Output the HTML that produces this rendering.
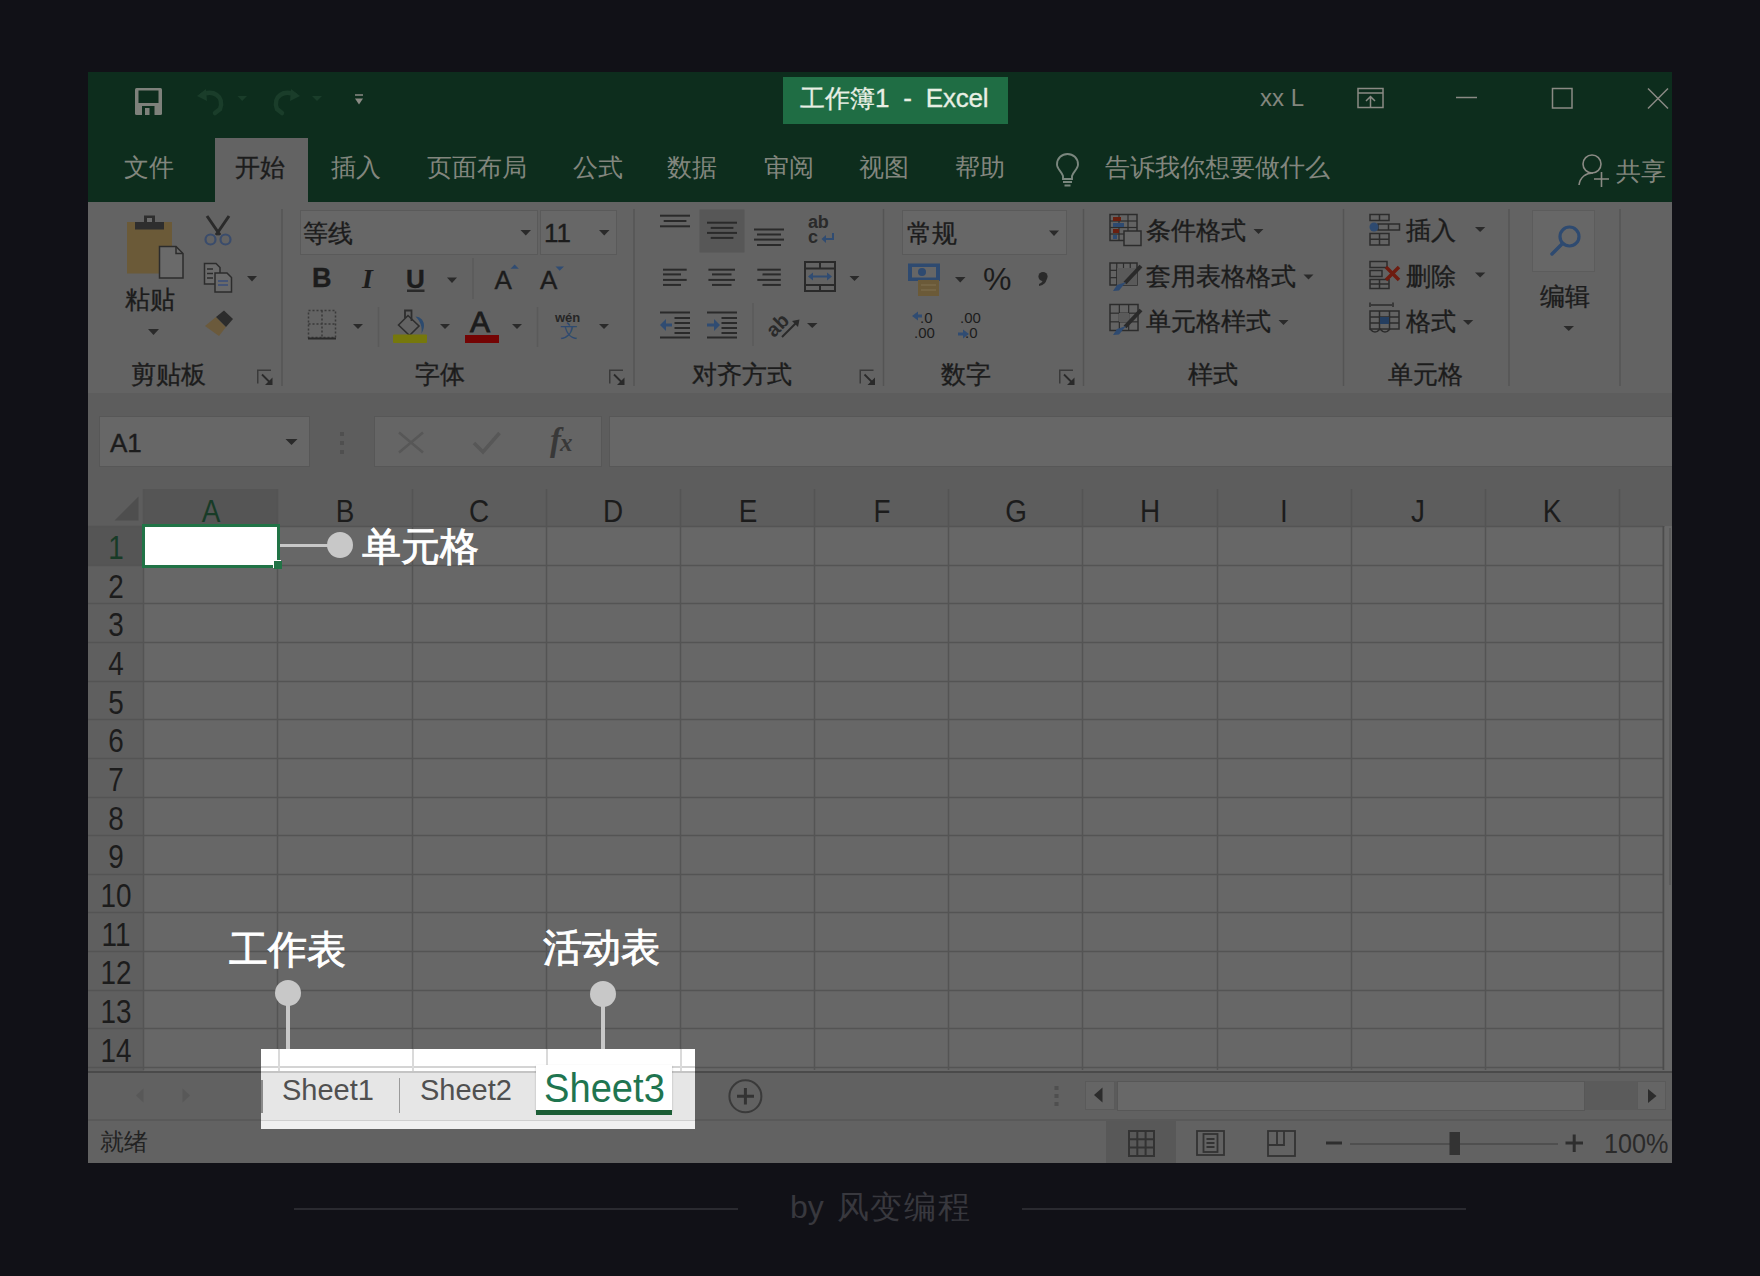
<!DOCTYPE html><html><head><meta charset="utf-8"><title>Excel</title><style>

html,body{margin:0;padding:0}
body{width:1760px;height:1276px;background:#111117;position:relative;overflow:hidden;font-family:"Liberation Sans",sans-serif}
.t{position:absolute;white-space:nowrap;line-height:1}
.c{text-align:center}
.lab{font-size:39px;color:#fff;-webkit-text-stroke:0.9px #fff}

</style></head><body>
<div style="position:absolute;left:88px;top:72px;width:1584px;height:130px;background:#0d2d1d;"></div>
<div style="position:absolute;left:88px;top:202px;width:1584px;height:191px;background:#636363;"></div>
<div style="position:absolute;left:88px;top:393px;width:1584px;height:23px;background:#5d5d5d;"></div>
<div style="position:absolute;left:88px;top:416px;width:1584px;height:51px;background:#5d5d5d;"></div>
<div style="position:absolute;left:88px;top:467px;width:1584px;height:22px;background:#5d5d5d;"></div>
<div style="position:absolute;left:88px;top:489px;width:1584px;height:582px;background:#676767;"></div>
<div style="position:absolute;left:88px;top:1071px;width:1584px;height:49px;background:#616161;"></div>
<div style="position:absolute;left:88px;top:1120px;width:1584px;height:43px;background:#626262;"></div>
<div style="position:absolute;left:783px;top:77px;width:225px;height:47px;background:#1f6d44;"></div>
<div class="t" style="left:800px;top:86px;font-size:25px;color:#e8efe4;line-height:25px;-webkit-text-stroke:0.3px #e8efe4">工作簿<span style="font-size:26px;letter-spacing:-0.2px">1&nbsp;&nbsp;-&nbsp; Excel</span></div>
<div class="t" style="left:1260px;top:85.5px;font-size:24px;color:#82867e;">xx L</div>
<div style="position:absolute;left:215px;top:138px;width:93px;height:64px;background:#636363;"></div>
<div class="t" style="left:124px;top:155px;font-size:25px;color:#82867e;">文件</div>
<div class="t" style="left:235px;top:155px;font-size:25px;color:#1c1c1c;-webkit-text-stroke:0.35px #1c1c1c;">开始</div>
<div class="t" style="left:331px;top:155px;font-size:25px;color:#82867e;">插入</div>
<div class="t" style="left:427px;top:155px;font-size:25px;color:#82867e;">页面布局</div>
<div class="t" style="left:573px;top:155px;font-size:25px;color:#82867e;">公式</div>
<div class="t" style="left:667px;top:155px;font-size:25px;color:#82867e;">数据</div>
<div class="t" style="left:764px;top:155px;font-size:25px;color:#82867e;">审阅</div>
<div class="t" style="left:859px;top:155px;font-size:25px;color:#82867e;">视图</div>
<div class="t" style="left:955px;top:155px;font-size:25px;color:#82867e;">帮助</div>
<div class="t" style="left:1105px;top:155px;font-size:25px;color:#82867e;">告诉我你想要做什么</div>
<div class="t" style="left:1616px;top:158.5px;font-size:25px;color:#82867e;">共享</div>
<div style="position:absolute;left:88px;top:489px;width:1584px;height:37px;background:#5d5d5d;"></div>
<div style="position:absolute;left:88px;top:526px;width:56px;height:545px;background:#5f5f5f;"></div>
<div style="position:absolute;left:144px;top:489px;width:134px;height:37px;background:#555555;"></div>
<div style="position:absolute;left:88px;top:526px;width:56px;height:39px;background:#555555;"></div>
<div class="t c" style="left:170.9px;top:496.5px;width:80px;font-size:30px;color:#183b27;transform:scale(0.93,1.05)">A</div>
<div class="t c" style="left:305.0px;top:496.5px;width:80px;font-size:30px;color:#1c1c1c;transform:scale(0.93,1.05)">B</div>
<div class="t c" style="left:439.2px;top:496.5px;width:80px;font-size:30px;color:#1c1c1c;transform:scale(0.93,1.05)">C</div>
<div class="t c" style="left:573.3px;top:496.5px;width:80px;font-size:30px;color:#1c1c1c;transform:scale(0.93,1.05)">D</div>
<div class="t c" style="left:707.5px;top:496.5px;width:80px;font-size:30px;color:#1c1c1c;transform:scale(0.93,1.05)">E</div>
<div class="t c" style="left:841.6px;top:496.5px;width:80px;font-size:30px;color:#1c1c1c;transform:scale(0.93,1.05)">F</div>
<div class="t c" style="left:975.8px;top:496.5px;width:80px;font-size:30px;color:#1c1c1c;transform:scale(0.93,1.05)">G</div>
<div class="t c" style="left:1109.9px;top:496.5px;width:80px;font-size:30px;color:#1c1c1c;transform:scale(0.93,1.05)">H</div>
<div class="t c" style="left:1244.1px;top:496.5px;width:80px;font-size:30px;color:#1c1c1c;transform:scale(0.93,1.05)">I</div>
<div class="t c" style="left:1378.2px;top:496.5px;width:80px;font-size:30px;color:#1c1c1c;transform:scale(0.93,1.05)">J</div>
<div class="t c" style="left:1512.4px;top:496.5px;width:80px;font-size:30px;color:#1c1c1c;transform:scale(0.93,1.05)">K</div>
<div class="t c" style="left:87.5px;top:533.0px;width:56px;font-size:30px;color:#183b27;transform:scale(0.93,1.08)">1</div>
<div class="t c" style="left:87.5px;top:571.6px;width:56px;font-size:30px;color:#1c1c1c;transform:scale(0.93,1.08)">2</div>
<div class="t c" style="left:87.5px;top:610.3px;width:56px;font-size:30px;color:#1c1c1c;transform:scale(0.93,1.08)">3</div>
<div class="t c" style="left:87.5px;top:649.0px;width:56px;font-size:30px;color:#1c1c1c;transform:scale(0.93,1.08)">4</div>
<div class="t c" style="left:87.5px;top:687.6px;width:56px;font-size:30px;color:#1c1c1c;transform:scale(0.93,1.08)">5</div>
<div class="t c" style="left:87.5px;top:726.2px;width:56px;font-size:30px;color:#1c1c1c;transform:scale(0.93,1.08)">6</div>
<div class="t c" style="left:87.5px;top:764.9px;width:56px;font-size:30px;color:#1c1c1c;transform:scale(0.93,1.08)">7</div>
<div class="t c" style="left:87.5px;top:803.5px;width:56px;font-size:30px;color:#1c1c1c;transform:scale(0.93,1.08)">8</div>
<div class="t c" style="left:87.5px;top:842.2px;width:56px;font-size:30px;color:#1c1c1c;transform:scale(0.93,1.08)">9</div>
<div class="t c" style="left:87.5px;top:880.8px;width:56px;font-size:30px;color:#1c1c1c;transform:scale(0.93,1.08)">10</div>
<div class="t c" style="left:87.5px;top:919.5px;width:56px;font-size:30px;color:#1c1c1c;transform:scale(0.93,1.08)">11</div>
<div class="t c" style="left:87.5px;top:958.1px;width:56px;font-size:30px;color:#1c1c1c;transform:scale(0.93,1.08)">12</div>
<div class="t c" style="left:87.5px;top:996.8px;width:56px;font-size:30px;color:#1c1c1c;transform:scale(0.93,1.08)">13</div>
<div class="t c" style="left:87.5px;top:1035.5px;width:56px;font-size:30px;color:#1c1c1c;transform:scale(0.93,1.08)">14</div>
<div style="position:absolute;left:99px;top:416px;width:211px;height:51px;background:#676767;box-sizing:border-box;border:1.5px solid #575757"></div>
<div class="t" style="left:110px;top:429.5px;font-size:26px;color:#1c1c1c;-webkit-text-stroke:0.35px #1c1c1c;">A1</div>
<div style="position:absolute;left:374px;top:416px;width:228px;height:51px;background:#656565;box-sizing:border-box;border:1.5px solid #575757"></div>
<div style="position:absolute;left:609px;top:416px;width:1063px;height:51px;background:#676767;box-sizing:border-box;border:1.5px solid #575757;border-right:none"></div>
<div class="t" style="left:550px;top:424px;font-size:33px;font-family:'Liberation Serif',serif;font-style:italic;font-weight:bold;color:#383838;letter-spacing:-1px">f<span style="font-size:25px;font-weight:bold">x</span></div>
<div style="position:absolute;left:1085px;top:1081px;width:30px;height:29px;background:#656565;box-sizing:border-box;border:1.5px solid #5a5a5a"></div>
<div style="position:absolute;left:1115px;top:1081px;width:522px;height:29px;background:#5b5b5b;"></div>
<div style="position:absolute;left:1117px;top:1080.5px;width:468px;height:30px;background:#686868;box-sizing:border-box;border:1.5px solid #575757"></div>
<div style="position:absolute;left:1637px;top:1081px;width:29px;height:29px;background:#656565;box-sizing:border-box;border:1.5px solid #5a5a5a"></div>
<div class="t" style="left:100px;top:1130px;font-size:24px;color:#222;">就绪</div>
<div style="position:absolute;left:1106px;top:1121px;width:70px;height:42px;background:#585858;"></div>
<div class="t" style="left:1604px;top:1130px;font-size:28px;color:#2a2a2a;transform:scaleX(0.9);transform-origin:0 0">100%</div>
<div class="t" style="left:131px;top:361.5px;font-size:25px;color:#1c1c1c;-webkit-text-stroke:0.35px #1c1c1c;">剪贴板</div>
<div class="t" style="left:415px;top:361.5px;font-size:25px;color:#1c1c1c;-webkit-text-stroke:0.35px #1c1c1c;">字体</div>
<div class="t" style="left:692px;top:361.5px;font-size:25px;color:#1c1c1c;-webkit-text-stroke:0.35px #1c1c1c;">对齐方式</div>
<div class="t" style="left:941px;top:361.5px;font-size:25px;color:#1c1c1c;-webkit-text-stroke:0.35px #1c1c1c;">数字</div>
<div class="t" style="left:1188px;top:361.5px;font-size:25px;color:#1c1c1c;-webkit-text-stroke:0.35px #1c1c1c;">样式</div>
<div class="t" style="left:1388px;top:361.5px;font-size:25px;color:#1c1c1c;-webkit-text-stroke:0.35px #1c1c1c;">单元格</div>
<div class="t" style="left:125px;top:287px;font-size:25px;color:#1c1c1c;-webkit-text-stroke:0.35px #1c1c1c;">粘贴</div>
<div style="position:absolute;left:300px;top:209.5px;width:238px;height:45px;background:#676767;box-sizing:border-box;border:1.5px solid #5a5a5a"></div>
<div style="position:absolute;left:540px;top:209.5px;width:77px;height:45px;background:#676767;box-sizing:border-box;border:1.5px solid #5a5a5a"></div>
<div class="t" style="left:303px;top:221px;font-size:25px;color:#1c1c1c;-webkit-text-stroke:0.35px #1c1c1c;">等线</div>
<div class="t" style="left:544px;top:220px;font-size:26px;color:#1c1c1c;-webkit-text-stroke:0.35px #1c1c1c;">11</div>
<div class="t" style="left:312px;top:265px;font-size:27px;color:#1c1c1c;-webkit-text-stroke:0.35px #1c1c1c;font-weight:bold">B</div>
<div class="t" style="left:362px;top:265px;font-size:28px;color:#1c1c1c;font-family:'Liberation Serif',serif;font-style:italic;font-weight:bold">I</div>
<div class="t" style="left:406px;top:266px;font-size:26px;color:#1c1c1c;-webkit-text-stroke:0.35px #1c1c1c;font-weight:bold">U</div>
<div class="t" style="left:494.5px;top:267px;font-size:26px;color:#1c1c1c;-webkit-text-stroke:0.35px #1c1c1c;">A</div>
<div class="t" style="left:540px;top:267px;font-size:26px;color:#1c1c1c;-webkit-text-stroke:0.35px #1c1c1c;">A</div>
<div class="t" style="left:470px;top:306.5px;font-size:30px;color:#1c1c1c;-webkit-text-stroke:0.35px #1c1c1c;-webkit-text-stroke:0.9px #1c1c1c">A</div>
<div class="t" style="left:555px;top:311px;font-size:13px;color:#262626;font-weight:bold">wén</div>
<div class="t" style="left:560px;top:322px;font-size:18px;color:#2e4a70;">文</div>
<div class="t" style="left:808px;top:213px;font-size:18px;color:#2a2a2a;font-weight:bold;letter-spacing:-0.3px">ab</div>
<div class="t" style="left:808px;top:227.5px;font-size:18px;color:#2a2a2a;font-weight:bold">c</div>
<div class="t" style="left:766px;top:312px;font-size:20px;color:#2a2a2a;font-weight:bold;transform:rotate(-45deg);transform-origin:15px 12px">ab</div>
<div style="position:absolute;left:901.5px;top:209.5px;width:165px;height:45px;background:#676767;box-sizing:border-box;border:1.5px solid #5a5a5a"></div>
<div class="t" style="left:907px;top:221px;font-size:25px;color:#1c1c1c;-webkit-text-stroke:0.35px #1c1c1c;">常规</div>
<div class="t" style="left:983px;top:263px;font-size:32px;color:#1c1c1c;-webkit-text-stroke:0.35px #1c1c1c;-webkit-text-stroke:0;">%</div>
<div class="t" style="left:920px;top:310px;font-size:15px;color:#1c1c1c;">.0</div>
<div class="t" style="left:914px;top:325px;font-size:15px;color:#1c1c1c;">.00</div>
<div class="t" style="left:960px;top:310px;font-size:15px;color:#1c1c1c;">.00</div>
<div class="t" style="left:965px;top:325px;font-size:15px;color:#1c1c1c;">.0</div>
<div class="t" style="left:1128px;top:230px;font-size:12px;color:#1c1c1c;">≠</div>
<div class="t" style="left:1146px;top:218px;font-size:25px;color:#1c1c1c;-webkit-text-stroke:0.35px #1c1c1c;">条件格式</div>
<div class="t" style="left:1146px;top:263.5px;font-size:25px;color:#1c1c1c;-webkit-text-stroke:0.35px #1c1c1c;">套用表格格式</div>
<div class="t" style="left:1146px;top:309px;font-size:25px;color:#1c1c1c;-webkit-text-stroke:0.35px #1c1c1c;">单元格样式</div>
<div class="t" style="left:1406px;top:218px;font-size:25px;color:#1c1c1c;-webkit-text-stroke:0.35px #1c1c1c;">插入</div>
<div class="t" style="left:1406px;top:264px;font-size:25px;color:#1c1c1c;-webkit-text-stroke:0.35px #1c1c1c;">删除</div>
<div class="t" style="left:1406px;top:309px;font-size:25px;color:#1c1c1c;-webkit-text-stroke:0.35px #1c1c1c;">格式</div>
<div style="position:absolute;left:1532px;top:209.5px;width:63px;height:62.5px;background:#676767;box-sizing:border-box;border:1.5px solid #5c5c5c"></div>
<div class="t" style="left:1540px;top:284px;font-size:25px;color:#1c1c1c;-webkit-text-stroke:0.35px #1c1c1c;">编辑</div>
<svg style="position:absolute;left:0;top:0" width="1760" height="1276" viewBox="0 0 1760 1276"><line x1="143.5" y1="489" x2="143.5" y2="1070" stroke="#545454" stroke-width="1.5"/><line x1="277.5" y1="489" x2="277.5" y2="1070" stroke="#545454" stroke-width="1.5"/><line x1="412.5" y1="489" x2="412.5" y2="1070" stroke="#545454" stroke-width="1.5"/><line x1="546.5" y1="489" x2="546.5" y2="1070" stroke="#545454" stroke-width="1.5"/><line x1="680.5" y1="489" x2="680.5" y2="1070" stroke="#545454" stroke-width="1.5"/><line x1="814.5" y1="489" x2="814.5" y2="1070" stroke="#545454" stroke-width="1.5"/><line x1="948.5" y1="489" x2="948.5" y2="1070" stroke="#545454" stroke-width="1.5"/><line x1="1082.5" y1="489" x2="1082.5" y2="1070" stroke="#545454" stroke-width="1.5"/><line x1="1217.5" y1="489" x2="1217.5" y2="1070" stroke="#545454" stroke-width="1.5"/><line x1="1351.5" y1="489" x2="1351.5" y2="1070" stroke="#545454" stroke-width="1.5"/><line x1="1485.5" y1="489" x2="1485.5" y2="1070" stroke="#545454" stroke-width="1.5"/><line x1="1619.5" y1="489" x2="1619.5" y2="1070" stroke="#545454" stroke-width="1.5"/><line x1="88" y1="526.5" x2="1663" y2="526.5" stroke="#545454" stroke-width="1.5"/><line x1="88" y1="565.5" x2="1663" y2="565.5" stroke="#545454" stroke-width="1.5"/><line x1="88" y1="603.5" x2="1663" y2="603.5" stroke="#545454" stroke-width="1.5"/><line x1="88" y1="642.5" x2="1663" y2="642.5" stroke="#545454" stroke-width="1.5"/><line x1="88" y1="681.5" x2="1663" y2="681.5" stroke="#545454" stroke-width="1.5"/><line x1="88" y1="719.5" x2="1663" y2="719.5" stroke="#545454" stroke-width="1.5"/><line x1="88" y1="758.5" x2="1663" y2="758.5" stroke="#545454" stroke-width="1.5"/><line x1="88" y1="797.5" x2="1663" y2="797.5" stroke="#545454" stroke-width="1.5"/><line x1="88" y1="835.5" x2="1663" y2="835.5" stroke="#545454" stroke-width="1.5"/><line x1="88" y1="874.5" x2="1663" y2="874.5" stroke="#545454" stroke-width="1.5"/><line x1="88" y1="912.5" x2="1663" y2="912.5" stroke="#545454" stroke-width="1.5"/><line x1="88" y1="951.5" x2="1663" y2="951.5" stroke="#545454" stroke-width="1.5"/><line x1="88" y1="990.5" x2="1663" y2="990.5" stroke="#545454" stroke-width="1.5"/><line x1="88" y1="1028.5" x2="1663" y2="1028.5" stroke="#545454" stroke-width="1.5"/><line x1="88" y1="1067.5" x2="1663" y2="1067.5" stroke="#545454" stroke-width="1.5"/><line x1="1663.5" y1="526" x2="1663.5" y2="1070" stroke="#4c4c4c" stroke-width="2"/><rect x="1664.5" y="527" width="7.5" height="544" fill="#686868"/><line x1="1670" y1="528" x2="1670" y2="885" stroke="#595959" stroke-width="1.5"/><line x1="88" y1="1072" x2="1672" y2="1072" stroke="#4a4a4a" stroke-width="2"/><line x1="88" y1="1120" x2="1672" y2="1120" stroke="#575757" stroke-width="1.5"/><polygon points="138.5,496.5 138.5,520.5 114.5,520.5" fill="#4e4e4e"/><polygon points="285.5,439 297.5,439 291.5,445" fill="#2a2a2a"/><rect x="340" y="432" width="4" height="4" fill="#4f4f4f"/><rect x="340" y="441" width="4" height="4" fill="#4f4f4f"/><rect x="340" y="450" width="4" height="4" fill="#4f4f4f"/><path d="M399 432.5 L423 452.5 M423 432.5 L399 452.5" stroke="#575757" stroke-width="2.5"/><path d="M474 443 L483 452 L499.5 433" stroke="#575757" stroke-width="3.5" fill="none"/><path d="M143.5 1088.5 L136 1095.5 L143.5 1102.5 Z" fill="#585858"/><path d="M182.5 1088.5 L190 1095.5 L182.5 1102.5 Z" fill="#585858"/><circle cx="745.4" cy="1096.3" r="16" fill="none" stroke="#3a3a3a" stroke-width="2"/><path d="M737 1096.3 H754 M745.4 1088 V1104.5" stroke="#333" stroke-width="3"/><rect x="1054.5" y="1086" width="4" height="4" fill="#4f4f4f"/><rect x="1054.5" y="1094" width="4" height="4" fill="#4f4f4f"/><rect x="1054.5" y="1102" width="4" height="4" fill="#4f4f4f"/><path d="M1102.5 1087.5 L1094 1095 L1102.5 1102.5 Z" fill="#2c2c2c"/><path d="M1648 1089 L1656.5 1096 L1648 1103 Z" fill="#2c2c2c"/><g stroke="#333" stroke-width="2" fill="none"><rect x="1129" y="1131" width="25" height="25"/><path d="M1137.3 1131 V1156 M1145.6 1131 V1156 M1129 1139.3 H1154 M1129 1147.6 H1154"/></g><g stroke="#333" stroke-width="1.8" fill="none"><rect x="1197" y="1131" width="27" height="24"/><rect x="1203.5" y="1134" width="14" height="18"/><path d="M1206.5 1139 H1214.5 M1206.5 1143 H1214.5 M1206.5 1147 H1214.5"/></g><g stroke="#333" stroke-width="1.8" fill="none"><rect x="1268" y="1131" width="27" height="25"/><path d="M1268 1145 H1284 V1131 M1277 1131 V1145"/></g><path d="M1326 1143 H1342" stroke="#2e2e2e" stroke-width="3"/><path d="M1350 1144 H1558" stroke="#4a4a4a" stroke-width="1.5"/><rect x="1449.5" y="1132" width="10.5" height="23" fill="#333"/><path d="M1565.5 1143 H1583 M1574.2 1134.5 V1152" stroke="#2e2e2e" stroke-width="3"/><line x1="282" y1="209" x2="282" y2="386" stroke="#545454" stroke-width="1.5"/><line x1="634" y1="209" x2="634" y2="386" stroke="#545454" stroke-width="1.5"/><line x1="883.5" y1="209" x2="883.5" y2="386" stroke="#545454" stroke-width="1.5"/><line x1="1083.5" y1="209" x2="1083.5" y2="386" stroke="#545454" stroke-width="1.5"/><line x1="1343.5" y1="209" x2="1343.5" y2="386" stroke="#545454" stroke-width="1.5"/><line x1="1509" y1="209" x2="1509" y2="386" stroke="#545454" stroke-width="1.5"/><line x1="1620" y1="209" x2="1620" y2="386" stroke="#545454" stroke-width="1.5"/><line x1="473" y1="258" x2="473" y2="299" stroke="#5a5a5a" stroke-width="1.5"/><line x1="378.5" y1="307" x2="378.5" y2="347" stroke="#5a5a5a" stroke-width="1.5"/><line x1="537.5" y1="307" x2="537.5" y2="347" stroke="#5a5a5a" stroke-width="1.5"/><line x1="753" y1="303" x2="753" y2="346" stroke="#5a5a5a" stroke-width="1.5"/><path d="M257.75 383.5 V370.25 H271" stroke="#3a3a3a" stroke-width="1.5" fill="none"/><path d="M262 374.5 L270 382.5" stroke="#2a2a2a" stroke-width="1.8"/><polygon points="272.5,385.0 265,385.0 272.5,377.5" fill="#2a2a2a"/><path d="M609.75 383.5 V370.25 H623" stroke="#3a3a3a" stroke-width="1.5" fill="none"/><path d="M614 374.5 L622 382.5" stroke="#2a2a2a" stroke-width="1.8"/><polygon points="624.5,385.0 617,385.0 624.5,377.5" fill="#2a2a2a"/><path d="M860.25 383.5 V370.25 H873.5" stroke="#3a3a3a" stroke-width="1.5" fill="none"/><path d="M864.5 374.5 L872.5 382.5" stroke="#2a2a2a" stroke-width="1.8"/><polygon points="875.0,385.0 867.5,385.0 875.0,377.5" fill="#2a2a2a"/><path d="M1059.75 383.5 V370.25 H1073" stroke="#3a3a3a" stroke-width="1.5" fill="none"/><path d="M1064 374.5 L1072 382.5" stroke="#2a2a2a" stroke-width="1.8"/><polygon points="1074.5,385.0 1067,385.0 1074.5,377.5" fill="#2a2a2a"/><rect x="127" y="222" width="45" height="51.5" fill="#6b5a38"/><rect x="135" y="222" width="29" height="7.5" fill="#2e2e2e"/><rect x="144" y="215.5" width="11" height="8" fill="#2e2e2e"/><rect x="147" y="218" width="5" height="4" fill="#6b6b6b"/><path d="M159.5 246.5 H176 L183 253.5 V278 H159.5 Z" fill="#6a6a6a" stroke="#2c2c2c" stroke-width="1.5"/><path d="M176 246.5 V253.5 H183" fill="none" stroke="#2c2c2c" stroke-width="1.5"/><polygon points="148,329 159,329 153.5,335" fill="#2a2a2a"/><g fill="none" stroke-width="2"><path d="M207 216 L220 235 M229 216 L216 235" stroke="#2a2a2a" stroke-width="3"/><circle cx="210.5" cy="239.5" r="5" stroke="#3a4c6c" stroke-width="2.2"/><circle cx="225.5" cy="239.5" r="5" stroke="#3a4c6c" stroke-width="2.2"/></g><g stroke="#2c2c2c" stroke-width="1.5" fill="#6a6a6a"><path d="M204.5 263.5 H216 L220 267.5 V284 H204.5 Z"/><path d="M215 273 H227 L231.5 277.5 V292 H215 Z"/></g><g stroke="#2c2c2c" stroke-width="1.5"><path d="M207 269 H213 M207 273.5 H213 M207 278 H213"/></g><g stroke="#3a4e7a" stroke-width="1.5"><path d="M218 281 H228 M218 285 H228"/></g><polygon points="247,276 257,276 252.0,281.5" fill="#2a2a2a"/><path d="M205 326 L216 317 L226 327 L219 336 Z" fill="#6b5a3c"/><path d="M216 317 L224 310.5 L233 319 L226 327 Z" fill="#2c2c2c"/><polygon points="520.5,230 531.0,230 525.75,235.5" fill="#2a2a2a"/><polygon points="599,230 609.5,230 604.25,235.5" fill="#2a2a2a"/><rect x="407" y="289.5" width="17.5" height="2.5" fill="#2a2a2a"/><polygon points="447,277.5 457,277.5 452.0,283.0" fill="#2a2a2a"/><polygon points="510.5,268.8 518.8,268.8 514.7,264.5" fill="#304c72"/><polygon points="555.5,266.5 564,266.5 559.7,270.8" fill="#304c72"/><g stroke="#3a3a3a" stroke-width="1.5" stroke-dasharray="2,2" fill="none"><rect x="308.5" y="310.5" width="27" height="27"/><path d="M322 310.5 V337.5 M308.5 324 H335.5"/></g><path d="M308 338.5 H336" stroke="#2a2a2a" stroke-width="2"/><polygon points="353,324 363,324 358.0,329" fill="#2a2a2a"/><path d="M398.5 325 L408 315.5 L419 326 L409.5 335.5 Z" fill="none" stroke="#2e2e2e" stroke-width="1.6"/><path d="M405 318 V310.5 H411.5 V321" fill="none" stroke="#2e2e2e" stroke-width="1.8"/><path d="M415.5 316.5 C423 317 427 325 421.5 333.5 C422.5 326 420 321 415.5 316.5 Z" fill="#2c4a6e"/><rect x="393" y="334.5" width="34" height="8.5" rx="1" fill="#76780c"/><polygon points="440,324 450,324 445.0,329" fill="#2a2a2a"/><rect x="465" y="335" width="34" height="8" fill="#740404"/><polygon points="512,324 522,324 517.0,329" fill="#2a2a2a"/><polygon points="599,324 609,324 604.0,329" fill="#2a2a2a"/><line x1="660" y1="215.7" x2="690" y2="215.7" stroke="#2a2a2a" stroke-width="2"/><line x1="663.7" y1="221" x2="686.4" y2="221" stroke="#2a2a2a" stroke-width="2"/><line x1="660" y1="226.3" x2="690" y2="226.3" stroke="#2a2a2a" stroke-width="2"/><rect x="699.5" y="209.5" width="45" height="43" fill="#575757"/><line x1="707" y1="222.7" x2="737" y2="222.7" stroke="#2a2a2a" stroke-width="2"/><line x1="710.7" y1="227.9" x2="733.4" y2="227.9" stroke="#2a2a2a" stroke-width="2"/><line x1="707" y1="232.9" x2="737" y2="232.9" stroke="#2a2a2a" stroke-width="2"/><line x1="710.7" y1="237.9" x2="733.4" y2="237.9" stroke="#2a2a2a" stroke-width="2"/><line x1="754" y1="229.5" x2="784" y2="229.5" stroke="#2a2a2a" stroke-width="2"/><line x1="757" y1="234.5" x2="781" y2="234.5" stroke="#2a2a2a" stroke-width="2"/><line x1="754" y1="239.6" x2="784" y2="239.6" stroke="#2a2a2a" stroke-width="2"/><line x1="757" y1="245" x2="781" y2="245" stroke="#2a2a2a" stroke-width="2"/><path d="M833 233 V239 H823" stroke="#304c72" stroke-width="2" fill="none"/><polygon points="821.5,239 826,235 826,243" fill="#304c72"/><line x1="663" y1="269.7" x2="686.7" y2="269.7" stroke="#2a2a2a" stroke-width="2"/><line x1="663" y1="274.4" x2="681" y2="274.4" stroke="#2a2a2a" stroke-width="2"/><line x1="663" y1="279.9" x2="686.7" y2="279.9" stroke="#2a2a2a" stroke-width="2"/><line x1="663" y1="284.9" x2="681" y2="284.9" stroke="#2a2a2a" stroke-width="2"/><line x1="708.4" y1="269.7" x2="735" y2="269.7" stroke="#2a2a2a" stroke-width="2"/><line x1="712" y1="274.4" x2="731.5" y2="274.4" stroke="#2a2a2a" stroke-width="2"/><line x1="708.4" y1="279.9" x2="735" y2="279.9" stroke="#2a2a2a" stroke-width="2"/><line x1="712" y1="284.9" x2="731.5" y2="284.9" stroke="#2a2a2a" stroke-width="2"/><line x1="757.3" y1="269.7" x2="780.8" y2="269.7" stroke="#2a2a2a" stroke-width="2"/><line x1="762.5" y1="274.4" x2="780.8" y2="274.4" stroke="#2a2a2a" stroke-width="2"/><line x1="757.3" y1="279.9" x2="780.8" y2="279.9" stroke="#2a2a2a" stroke-width="2"/><line x1="762.5" y1="284.9" x2="780.8" y2="284.9" stroke="#2a2a2a" stroke-width="2"/><g stroke="#2a2a2a" stroke-width="2" fill="none"><rect x="805" y="262" width="30" height="29"/><path d="M805 268.5 H835 M805 285 H835 M820 262 V268.5 M820 285 V291"/></g><path d="M810 276.5 H830" stroke="#304c72" stroke-width="2"/><polygon points="808,276.5 813,272.5 813,280.5" fill="#304c72"/><polygon points="832,276.5 827,272.5 827,280.5" fill="#304c72"/><polygon points="849.5,276 859.5,276 854.5,281" fill="#2a2a2a"/><line x1="660" y1="312.5" x2="690" y2="312.5" stroke="#2a2a2a" stroke-width="2"/><line x1="674.5" y1="318" x2="690" y2="318" stroke="#2a2a2a" stroke-width="2"/><line x1="674.5" y1="323" x2="690" y2="323" stroke="#2a2a2a" stroke-width="2"/><line x1="674.5" y1="328" x2="690" y2="328" stroke="#2a2a2a" stroke-width="2"/><line x1="674.5" y1="333" x2="690" y2="333" stroke="#2a2a2a" stroke-width="2"/><line x1="660" y1="337.5" x2="690" y2="337.5" stroke="#2a2a2a" stroke-width="2"/><path d="M672 325 H664" stroke="#304c72" stroke-width="3"/><polygon points="660,325 666,319 666,331" fill="#304c72"/><line x1="707" y1="312.5" x2="737" y2="312.5" stroke="#2a2a2a" stroke-width="2"/><line x1="721.5" y1="318" x2="737" y2="318" stroke="#2a2a2a" stroke-width="2"/><line x1="721.5" y1="323" x2="737" y2="323" stroke="#2a2a2a" stroke-width="2"/><line x1="721.5" y1="328" x2="737" y2="328" stroke="#2a2a2a" stroke-width="2"/><line x1="721.5" y1="333" x2="737" y2="333" stroke="#2a2a2a" stroke-width="2"/><line x1="707" y1="337.5" x2="737" y2="337.5" stroke="#2a2a2a" stroke-width="2"/><path d="M707 325 H715" stroke="#304c72" stroke-width="3"/><polygon points="720,325 714,319 714,331" fill="#304c72"/><path d="M782 337 L798 321" stroke="#2a2a2a" stroke-width="2"/><polygon points="799.5,319.5 792,321 798,327" fill="#2a2a2a"/><polygon points="807,323 817.5,323 812.25,328" fill="#2a2a2a"/><polygon points="1049,230.5 1059,230.5 1054.0,236.0" fill="#2a2a2a"/><rect x="908" y="263.5" width="32" height="17.5" fill="#2e4a70"/><rect x="912" y="267" width="24" height="10.5" fill="#666"/><circle cx="922" cy="272" r="4" fill="#2e4a70"/><rect x="918" y="280" width="21" height="16" fill="#6b5a38"/><path d="M921 285 H936 M921 290 H936" stroke="#7a6a48" stroke-width="1.5"/><polygon points="955,277 965.5,277 960.25,282.5" fill="#2a2a2a"/><circle cx="1043" cy="276.5" r="4.6" fill="#2a2a2a"/><path d="M1046.5 278 C1047 282 1044 285 1039 286 L1039 284 C1042 283 1043 281 1042.5 279 Z" fill="#2a2a2a"/><polygon points="912,316 918,311.5 918,320.5" fill="#304c72"/><rect x="917" y="314.5" width="5" height="3" fill="#304c72"/><polygon points="969,334 963,329.5 963,338.5" fill="#304c72"/><rect x="958" y="332.5" width="6" height="3" fill="#304c72"/><rect x="1110" y="214.5" width="27" height="26" fill="none" stroke="#2c2c2c" stroke-width="1.5"/><line x1="1119.0" y1="214.5" x2="1119.0" y2="240.5" stroke="#2c2c2c" stroke-width="1.2"/><line x1="1128.0" y1="214.5" x2="1128.0" y2="240.5" stroke="#2c2c2c" stroke-width="1.2"/><line x1="1110" y1="221.0" x2="1137" y2="221.0" stroke="#2c2c2c" stroke-width="1.2"/><line x1="1110" y1="227.5" x2="1137" y2="227.5" stroke="#2c2c2c" stroke-width="1.2"/><line x1="1110" y1="234.0" x2="1137" y2="234.0" stroke="#2c2c2c" stroke-width="1.2"/><rect x="1113" y="217" width="8" height="4" fill="#6a2010"/><rect x="1113" y="223" width="11" height="4" fill="#2e4a70"/><rect x="1113" y="229" width="6" height="4" fill="#6a2010"/><rect x="1113" y="235" width="4" height="4" fill="#2e4a70"/><rect x="1124" y="231" width="17" height="14.5" fill="#666" stroke="#2c2c2c" stroke-width="1.5"/><polygon points="1253.5,229 1263.5,229 1258.5,234" fill="#2a2a2a"/><rect x="1110" y="263" width="27" height="22" fill="none" stroke="#2c2c2c" stroke-width="1.5"/><line x1="1116.75" y1="263" x2="1116.75" y2="285" stroke="#2c2c2c" stroke-width="1.2"/><line x1="1123.5" y1="263" x2="1123.5" y2="285" stroke="#2c2c2c" stroke-width="1.2"/><line x1="1130.25" y1="263" x2="1130.25" y2="285" stroke="#2c2c2c" stroke-width="1.2"/><line x1="1110" y1="270.3333333333333" x2="1137" y2="270.3333333333333" stroke="#2c2c2c" stroke-width="1.2"/><line x1="1110" y1="277.6666666666667" x2="1137" y2="277.6666666666667" stroke="#2c2c2c" stroke-width="1.2"/><rect x="1117" y="268" width="20" height="17" fill="#5a5a5a"/><path d="M1141 266 L1125 283" stroke="#2a2a2a" stroke-width="4"/><path d="M1126 282 L1119 290.5 L1113 291 L1117 285 Z" fill="#2e4a70"/><polygon points="1303.5,274.5 1313.5,274.5 1308.5,279.5" fill="#2a2a2a"/><rect x="1110" y="304.5" width="28" height="26" fill="none" stroke="#2c2c2c" stroke-width="1.5"/><line x1="1119.3333333333333" y1="304.5" x2="1119.3333333333333" y2="330.5" stroke="#2c2c2c" stroke-width="1.2"/><line x1="1128.6666666666667" y1="304.5" x2="1128.6666666666667" y2="330.5" stroke="#2c2c2c" stroke-width="1.2"/><line x1="1110" y1="313.1666666666667" x2="1138" y2="313.1666666666667" stroke="#2c2c2c" stroke-width="1.2"/><line x1="1110" y1="321.8333333333333" x2="1138" y2="321.8333333333333" stroke="#2c2c2c" stroke-width="1.2"/><rect x="1119" y="313" width="10" height="9" fill="#5a5a5a"/><path d="M1141 310 L1125 327" stroke="#2a2a2a" stroke-width="4"/><path d="M1126 326 L1119 334.5 L1113 335 L1117 329 Z" fill="#2e4a70"/><polygon points="1278.5,320 1288.5,320 1283.5,325" fill="#2a2a2a"/><g stroke="#2c2c2c" stroke-width="1.5" fill="none"><rect x="1370" y="214.5" width="19" height="6"/><path d="M1379.5 214.5 V220.5"/><rect x="1378" y="224" width="21.5" height="6"/><path d="M1388.5 224 V230 M1370 233.5 H1389 V245 H1370 Z M1370 239.2 H1389 M1379.5 233.5 V245"/></g><circle cx="1374" cy="227" r="4.5" fill="#2e4a70"/><polygon points="1475,227 1485.3,227 1480.15,232" fill="#2a2a2a"/><g stroke="#2c2c2c" stroke-width="1.5" fill="none"><rect x="1370" y="261.5" width="17" height="6"/><rect x="1370" y="270.5" width="12" height="6"/><path d="M1370 279.5 H1389 V288.5 H1370 Z M1379.5 279.5 V288.5 M1370 284 H1389"/></g><path d="M1386 267 L1399 280 M1399 267 L1386 280" stroke="#6e1c10" stroke-width="3.5"/><polygon points="1475,272.5 1485.3,272.5 1480.15,277.5" fill="#2a2a2a"/><g stroke="#2c2c2c" stroke-width="1.5" fill="none"><path d="M1370 302.5 V307 M1393 302.5 V307 M1371 305 H1392"/><rect x="1370" y="311" width="29" height="18"/><path d="M1379.5 311 V329 M1389.5 311 V329 M1370 317 H1399 M1370 323 H1399 M1370 329 Q1375 335 1380 329 Q1385 335 1390 329"/></g><rect x="1380" y="317" width="9" height="7" fill="#243e60"/><polygon points="1463,320 1473.3,320 1468.15,325" fill="#2a2a2a"/><circle cx="1569.5" cy="236.5" r="9.5" fill="none" stroke="#2e4a70" stroke-width="3.2"/><path d="M1562.5 243.5 L1552 254" stroke="#2e4a70" stroke-width="3.5" stroke-linecap="round"/><polygon points="1563.5,326 1574.0,326 1568.75,331" fill="#2a2a2a"/><rect x="135" y="88" width="27" height="27" rx="1.5" fill="#7e817b"/><rect x="138.5" y="90.5" width="20" height="12.5" fill="#0d2d1d"/><rect x="142" y="106" width="12.5" height="9" fill="#0d2d1d"/><rect x="145" y="108" width="4.5" height="7" fill="#7e817b"/><path d="M202 95 C212 89 225 96 220 109 L215 113" stroke="#1a3d2a" stroke-width="4.5" fill="none" stroke-linecap="round"/><polygon points="197,96 206,89 207,101" fill="#1a3d2a"/><polygon points="237.5,96 247,96 242.2,101" fill="#1a3d2a"/><path d="M295 95 C285 89 272 96 277 109 L282 113" stroke="#1a3d2a" stroke-width="4.5" fill="none" stroke-linecap="round"/><polygon points="300,96 291,89 290,101" fill="#1a3d2a"/><polygon points="312,96 322,96 317,101" fill="#1a3d2a"/><path d="M355 95 H363" stroke="#8a8a84" stroke-width="1.5"/><polygon points="355,98.5 363,98.5 359,104.5" fill="#8a8a84"/><g stroke="#8a8a84" stroke-width="1.5" fill="none"><rect x="1358" y="88.5" width="25" height="19"/><path d="M1358 93 H1383 M1370.5 97 V107.5 M1366 101 L1370.5 96.5 L1375 101"/></g><path d="M1456 97.5 H1477" stroke="#8a8a84" stroke-width="1.5"/><rect x="1552.5" y="88.5" width="19.5" height="19.5" fill="none" stroke="#8a8a84" stroke-width="1.5"/><path d="M1648 88.5 L1668 108.5 M1668 88.5 L1648 108.5" stroke="#8a8a84" stroke-width="1.5"/><g stroke="#7a877e" stroke-width="1.9" fill="none"><path d="M1063 179 V176 C1062 172 1057 169 1057 164.5 C1057 158 1062 154 1067.5 154 C1073 154 1078 158 1078 164.5 C1078 169 1073 172 1072 176 V179 Z"/><path d="M1063 182 H1072 M1064.5 185.5 H1070.5" stroke-width="2.2"/></g><g stroke="#8a8a84" stroke-width="1.6" fill="none"><circle cx="1592" cy="164" r="9"/><path d="M1579 185 C1580 177 1586 173 1593 173"/><path d="M1594 179 H1609 M1601.5 172 V187"/></g></svg>
<div style="position:absolute;left:142px;top:524px;width:138px;height:44px;background:#ffffff;box-sizing:border-box;border:3px solid #217346"></div>
<div style="position:absolute;left:274px;top:561px;width:8px;height:8px;background:#217346;box-shadow:-1px -1px 0 #fff"></div>
<div style="position:absolute;left:280px;top:544px;width:50px;height:3px;background:#c8c8c8;"></div>
<div style="position:absolute;left:327px;top:532px;width:26px;height:26px;background:#c8c8c8;border-radius:50%"></div>
<div class="t lab" style="left:362px;top:527px">单元格</div>
<div style="position:absolute;left:275px;top:980px;width:26px;height:26px;background:#c8c8c8;border-radius:50%"></div>
<div style="position:absolute;left:286px;top:1000px;width:4px;height:50px;background:#c8c8c8;"></div>
<div class="t lab" style="left:229px;top:930px">工作表</div>
<div style="position:absolute;left:590px;top:980.5px;width:26px;height:26px;background:#c8c8c8;border-radius:50%"></div>
<div style="position:absolute;left:601px;top:1000px;width:4px;height:50px;background:#c8c8c8;"></div>
<div class="t lab" style="left:543px;top:928px">活动表</div>
<div style="position:absolute;left:261px;top:1049px;width:434px;height:80px;background:#ffffff;"></div>
<div style="position:absolute;left:261px;top:1065.5px;width:434px;height:2px;background:#d4d4d4;"></div>
<div style="position:absolute;left:278px;top:1049px;width:1.5px;height:22px;background:#dadada;"></div>
<div style="position:absolute;left:412px;top:1049px;width:1.5px;height:22px;background:#dadada;"></div>
<div style="position:absolute;left:546px;top:1049px;width:1.5px;height:22px;background:#dadada;"></div>
<div style="position:absolute;left:680px;top:1049px;width:1.5px;height:22px;background:#dadada;"></div>
<div style="position:absolute;left:261px;top:1071px;width:434px;height:49px;background:#e6e6e6;"></div>
<div style="position:absolute;left:261px;top:1071px;width:434px;height:1.5px;background:#c4c4c4;"></div>
<div style="position:absolute;left:261px;top:1119.5px;width:434px;height:1.5px;background:#cfcfcf;"></div>
<div style="position:absolute;left:261px;top:1121px;width:434px;height:8px;background:#f0f0f0;"></div>
<div style="position:absolute;left:261px;top:1080px;width:1.5px;height:33px;background:#8a8a8a;"></div>
<div style="position:absolute;left:398.5px;top:1078px;width:1.5px;height:35px;background:#9a9a9a;"></div>
<div style="position:absolute;left:536px;top:1065px;width:136px;height:46px;background:#ffffff;box-shadow:0 1px 2px rgba(0,0,0,0.25)"></div>
<div style="position:absolute;left:536px;top:1110px;width:136px;height:4.5px;background:#1c5e36;"></div>
<div class="t" style="left:282px;top:1075.5px;font-size:29px;color:#505050">Sheet1</div>
<div class="t" style="left:420px;top:1075.5px;font-size:29px;color:#505050">Sheet2</div>
<div class="t" style="left:544px;top:1068px;font-size:41px;color:#1f7550;transform:scaleX(0.93);transform-origin:0 0">Sheet3</div>
<div style="position:absolute;left:294px;top:1207.5px;width:444px;height:2px;background:#2a2a30"></div>
<div style="position:absolute;left:1022px;top:1207.5px;width:444px;height:2px;background:#2a2a30"></div>
<div class="t" style="left:790px;top:1191px;font-size:32px;color:#38383e">by<span style="margin-left:13px;letter-spacing:1.6px">风变编程</span></div>
</body></html>
